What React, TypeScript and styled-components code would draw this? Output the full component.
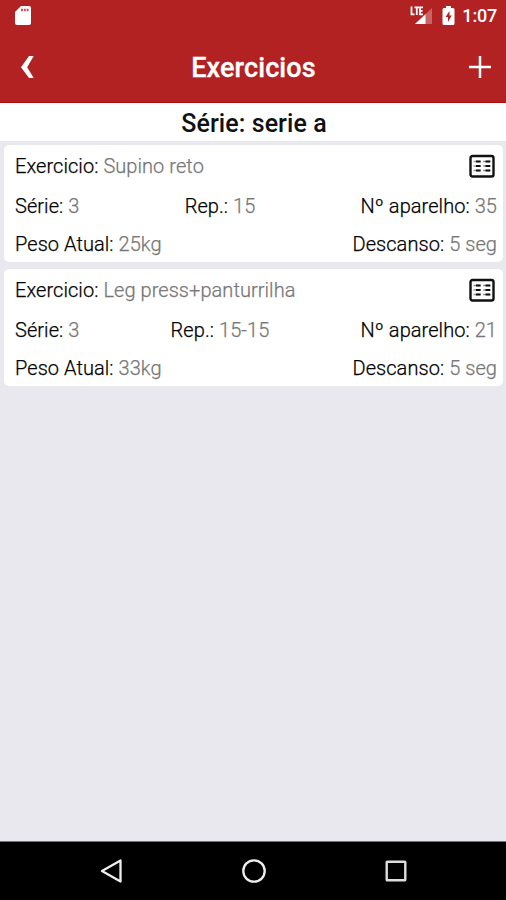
import React from 'react';
import styled, { createGlobalStyle } from 'styled-components';

const GlobalStyle = createGlobalStyle`
  *, *::before, *::after { box-sizing: border-box; }
  body { margin: 0; background: #e9e8ee; font-family: Roboto, sans-serif; }
`;

const Screen = styled.div`
  display: flex;
  flex-direction: column;
  height: 900px;
  width: 506px;
  overflow: hidden;
  background: #e9e8ee;
`;

const StatusBar = styled.div`
  display: flex;
  align-items: center;
  justify-content: space-between;
  height: 32px;
  padding: 0 9px 0 14px;
  background: #b22222;
  color: #fff;
`;

const StatusGroup = styled.div`
  display: flex;
  align-items: center;
`;

const Clock = styled.span`
  margin-left: 7px;
  font-size: 18px;
  font-weight: 500;
  line-height: 32px;
  letter-spacing: -0.2px;
`;

const BatteryIcon = styled.svg`
  margin-left: 9px;
`;

const Header = styled.header`
  display: grid;
  grid-template-columns: 60px 1fr 60px;
  align-items: center;
  height: 71px;
  background: #b22222;
  border-bottom: 1px solid #b00f12;
  color: #fff;
`;

const Title = styled.h1`
  margin: 2px 0 0;
  padding-left: 1px;
  text-align: center;
  font-size: 27px;
  font-weight: 500;
  line-height: 30px;
  letter-spacing: 0.1px;
  -webkit-text-stroke: 0.3px #fff;
`;

const IconButton = styled.button<{ $align: 'start' | 'end' }>`
  display: flex;
  justify-content: ${({ $align }) => $align};
  padding: ${({ $align }) => ($align === 'start' ? '0 0 0 20px' : '0 14px 0 0')};
  border: 0;
  background: none;
  color: inherit;
`;

const SeriesBar = styled.h2`
  margin: 0;
  padding-left: 2px;
  height: 38px;
  background: #fff;
  color: #111;
  text-align: center;
  font-size: 25px;
  font-weight: 500;
  line-height: 42px;
  letter-spacing: 0.08px;
`;

const List = styled.main`
  flex: 1;
  display: flex;
  flex-direction: column;
  gap: 7px;
  padding: 4px 3px 0 4px;
`;

const Card = styled.article`
  height: 117px;
  padding: 1px 6px 0 11px;
  border-radius: 5px;
  background: #fff;
`;

const Row = styled.div<{ $height: number }>`
  display: flex;
  align-items: center;
  justify-content: space-between;
  height: ${({ $height }) => $height}px;
`;

const Text = styled.span`
  color: #000;
  font-size: 20px;
  font-weight: 300;
  line-height: 24px;
  letter-spacing: 0.06px;
  -webkit-text-stroke: 0.25px #000;
  white-space: pre;
`;

const Value = styled.span`
  color: #777;
  -webkit-text-stroke: 0.25px #777;
`;

const ListIcon = styled.svg`
  margin-right: 2px;
`;

const NavBar = styled.nav`
  display: flex;
  align-items: center;
  justify-content: space-between;
  height: 59px;
  padding: 0 98px 0 99px;
  border-top: 1px solid #77777a;
  background: #000;
`;

function Field({ label, value }: { label: string; value: string }) {
  return (
    <Text>
      {label}: <Value>{value}</Value>
    </Text>
  );
}

interface Exercise {
  name: string;
  sets: string;
  reps: string;
  machine: string;
  weight: string;
  rest: string;
}

const exercises: Exercise[] = [
  { name: 'Supino reto', sets: '3', reps: '15', machine: '35', weight: '25kg', rest: '5 seg' },
  { name: 'Leg press+panturrilha', sets: '3', reps: '15-15', machine: '21', weight: '33kg', rest: '5 seg' },
];

function ExerciseCard({ item }: { item: Exercise }) {
  return (
    <Card>
      <Row $height={40}>
        <Field label="Exercicio" value={item.name} />
        <ListIcon width="26" height="24" viewBox="0 0 26 24" fill="none" stroke="#111">
          <rect x="1.5" y="2" width="23" height="20.5" rx="2" strokeWidth="2.4" />
          <path d="M4.5 7.5H12M14 7.5H22M4.5 12H12M14 12H22M4.5 16.5H12M14 16.5H22" strokeWidth="1.6" opacity=".45" />
          <path d="M7 7.5H11.5M7 12H11.5M7 16.5H11.5M16.5 7.5H21M16.5 12H21M16.5 16.5H21" strokeWidth="2" />
        </ListIcon>
      </Row>
      <Row $height={39}>
        <Field label="Série" value={item.sets} />
        <Field label="Rep." value={item.reps} />
        <Field label="Nº aparelho" value={item.machine} />
      </Row>
      <Row $height={37}>
        <Field label="Peso Atual" value={item.weight} />
        <Field label="Descanso" value={item.rest} />
      </Row>
    </Card>
  );
}

export default function App() {
  return (
    <Screen>
      <GlobalStyle />
      <StatusBar>
        <svg width="18" height="20" viewBox="0 0 18 20" fill="#fff">
          <path d="M7 0H15Q17 0 17 2V17Q17 19 15 19H3Q1 19 1 17V6Z" />
          <path d="M7 4H15" stroke="#b22222" strokeWidth="2.4" strokeDasharray="2 .8" opacity=".75" />
        </svg>
        <StatusGroup>
          <svg width="23" height="20" viewBox="0 0 23 20" fill="#fff">
            <path d="M22 2V18H5Z" opacity=".3" />
            <path d="M15.5 8.2V18H5Z" />
            <path d="M1.5 .5V8.3H4.5M4.5 1.3H9M6.8 1.3V9M13 1.3H10V8.3H13M10 4.8H12.6" fill="none" stroke="#fff" strokeWidth="1.8" />
          </svg>
          <BatteryIcon width="13" height="20" viewBox="0 0 13 20">
            <path d="M4 0H9V2H11Q12.5 2 12.5 3.5V17.5Q12.5 19 11 19H2Q.5 19 .5 17.5V3.5Q.5 2 2 2H4Z" fill="#fff" />
            <path d="M7.5 5L3.5 11H6V16L9.8 9.5H7.5Z" fill="#b22222" />
          </BatteryIcon>
          <Clock>1:07</Clock>
        </StatusGroup>
      </StatusBar>
      <Header>
        <IconButton $align="start" aria-label="Voltar">
          <svg width="15" height="24" viewBox="0 0 15 24" fill="#fff">
            <path d="M9 1H13.7L7.2 12.3L13.7 23H9L1 12.3Z" />
          </svg>
        </IconButton>
        <Title>Exercicios</Title>
        <IconButton $align="end" aria-label="Adicionar">
          <svg width="24" height="24" viewBox="0 0 24 24" stroke="#fff" strokeWidth="2.5">
            <path d="M12 1V23M1 12H23" />
          </svg>
        </IconButton>
      </Header>
      <SeriesBar>Série: serie a</SeriesBar>
      <List>
        {exercises.map((item) => (
          <ExerciseCard key={item.name} item={item} />
        ))}
      </List>
      <NavBar>
        <svg width="24" height="26" viewBox="0 0 24 26" fill="none" stroke="#eee" strokeWidth="2.3" strokeLinejoin="round">
          <path d="M21.5 2.5V23.5L3 13Z" />
        </svg>
        <svg width="26" height="26" viewBox="0 0 26 26" fill="none" stroke="#eee" strokeWidth="2.3">
          <circle cx="13" cy="13" r="10.7" />
        </svg>
        <svg width="24" height="24" viewBox="0 0 24 24" fill="none" stroke="#ddd" strokeWidth="2.4">
          <rect x="2.7" y="2.7" width="18.6" height="18.6" rx=".5" />
        </svg>
      </NavBar>
    </Screen>
  );
}
